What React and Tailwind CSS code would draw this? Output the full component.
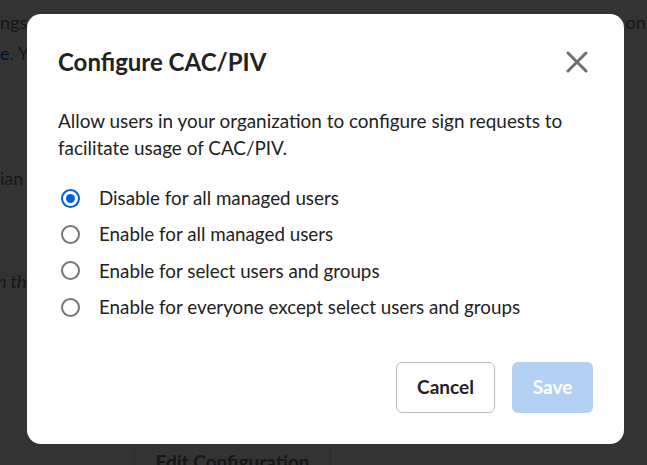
import { useState } from "react";

const OPTIONS = [
  "Disable for all managed users",
  "Enable for all managed users",
  "Enable for select users and groups",
  "Enable for everyone except select users and groups",
];

function Radio({ checked }) {
  return (
    <span
      className={
        "flex h-[19px] w-[19px] shrink-0 items-center justify-center rounded-full border-2 " +
        (checked ? "border-[#0061d5]" : "border-[#767676]")
      }
    >
      {checked && <span className="h-[9px] w-[9px] rounded-full bg-[#0061d5]" />}
    </span>
  );
}

export default function App() {
  const [selected, setSelected] = useState(0);

  return (
    <div
      className="relative h-[465px] w-[647px] overflow-hidden bg-[#333333] text-[#161616]"
      style={{ fontFamily: "Lato, 'Open Sans', sans-serif" }}
    >
      {/* PAGE BEHIND THE OVERLAY */}
      <div className="flex flex-col text-[18px] leading-[26px]">
        <div className="mt-[9px] flex justify-between">
          <span>ngs</span>
          <span className="-mr-[3px]">on.</span>
        </div>
        <div className="mt-[5px]">
          <span className="text-[#00132b]">e</span>. Y
        </div>
        <div className="mt-[99px]">ian</div>
        <div className="mt-[77px] -ml-[3px] italic">n th</div>
        <div className="ml-[134px] mt-[135px] flex h-[44px] w-[197px] items-center justify-center border-x border-[#2b2b2b] pt-[22px] text-[19px] font-bold">
          Edit Configuration
        </div>
      </div>

      {/* MODAL */}
      <div className="absolute left-[27px] top-[14px] flex w-[597px] flex-col rounded-[14px] bg-white px-[31px] pb-[31px] pt-[32px] text-[#222222]">
        <div className="flex items-center justify-between">
          <h2 className="text-[24px] font-bold leading-[32px]">Configure CAC/PIV</h2>
          <button className="mr-[1px] flex h-[30px] w-[30px] items-center justify-center">
            <svg width="22" height="22" viewBox="0 0 22 22">
              <path
                d="M2 2L20 20M20 2L2 20"
                stroke="#6f6f6f"
                strokeWidth="3"
                strokeLinecap="round"
              />
            </svg>
          </button>
        </div>

        <p className="mt-[29px] text-[18.9px] leading-[27px]">
          Allow users in your organization to configure sign requests to facilitate usage of
          CAC/PIV.
        </p>

        <div className="mt-[19px] flex flex-col">
          {OPTIONS.map((label, i) => (
            <label
              key={label}
              onClick={() => setSelected(i)}
              className="flex h-[36.3px] cursor-pointer items-center gap-[19px] pl-[3px] text-[18.8px]"
            >
              <Radio checked={selected === i} />
              <span>{label}</span>
            </label>
          ))}
        </div>

        <div className="mt-[37px] flex justify-end gap-[17px]">
          <button className="h-[51px] w-[99px] rounded-[6px] border border-[#bdbdbd] bg-white text-[19px] font-bold text-[#222222]">
            Cancel
          </button>
          <button className="h-[51px] w-[81px] rounded-[6px] bg-[#b3d1f3] text-[19px] font-bold text-white">
            Save
          </button>
        </div>
      </div>
    </div>
  );
}
